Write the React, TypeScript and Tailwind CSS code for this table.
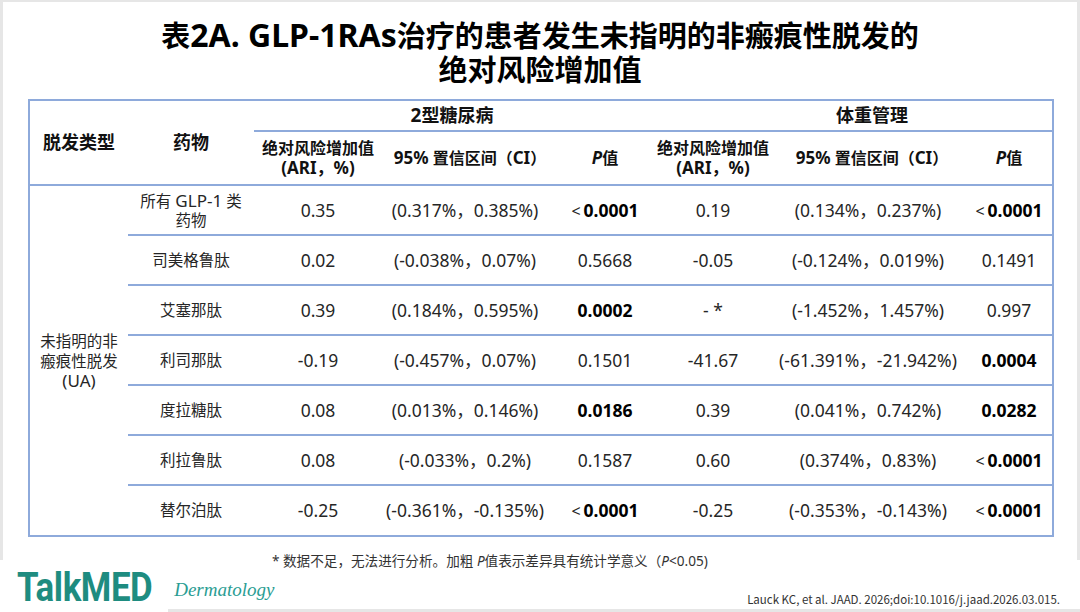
import React from "react";

type P = { t: string; b?: boolean };
type Row = {
  drug: React.ReactNode;
  a: string;
  ci: string;
  p: P;
  a2: string;
  ci2: string;
  p2: P;
};

const L = ({ children, c = "" }: { children: React.ReactNode; c?: string }) => (
  <span className={"text-[17px] " + c}>{children}</span>
);

const rows: Row[] = [
  {
    drug: (
      <>
        <span>
          所有 <L>GLP-1</L> 类
        </span>
        <span>药物</span>
      </>
    ),
    a: "0.35", ci: "(0.317%，0.385%)", p: { t: "<0.0001", b: true }, a2: "0.19", ci2: "(0.134%，0.237%)", p2: { t: "<0.0001", b: true },
  },
  { drug: <span>司美格鲁肽</span>, a: "0.02", ci: "(-0.038%，0.07%)", p: { t: "0.5668" }, a2: "-0.05", ci2: "(-0.124%，0.019%)", p2: { t: "0.1491" } },
  { drug: <span>艾塞那肽</span>, a: "0.39", ci: "(0.184%，0.595%)", p: { t: "0.0002", b: true }, a2: "- *", ci2: "(-1.452%，1.457%)", p2: { t: "0.997" } },
  { drug: <span>利司那肽</span>, a: "-0.19", ci: "(-0.457%，0.07%)", p: { t: "0.1501" }, a2: "-41.67", ci2: "(-61.391%，-21.942%)", p2: { t: "0.0004", b: true } },
  { drug: <span>度拉糖肽</span>, a: "0.08", ci: "(0.013%，0.146%)", p: { t: "0.0186", b: true }, a2: "0.39", ci2: "(0.041%，0.742%)", p2: { t: "0.0282", b: true } },
  { drug: <span>利拉鲁肽</span>, a: "0.08", ci: "(-0.033%，0.2%)", p: { t: "0.1587" }, a2: "0.60", ci2: "(0.374%，0.83%)", p2: { t: "<0.0001", b: true } },
  { drug: <span>替尔泊肽</span>, a: "-0.25", ci: "(-0.361%，-0.135%)", p: { t: "<0.0001", b: true }, a2: "-0.25", ci2: "(-0.353%，-0.143%)", p2: { t: "<0.0001", b: true } },
];

function PVal({ p }: { p: P }) {
  if (p.t.startsWith("<")) {
    return (
      <span>
        <span className="font-normal mr-[3px] text-[16px]">&lt;</span>
        <span className="font-bold text-black">{p.t.slice(1)}</span>
      </span>
    );
  }
  return <span className={p.b ? "font-bold text-black" : ""}>{p.t}</span>;
}

const font = { fontFamily: '"Noto Sans", "Noto Sans CJK SC", sans-serif' };

function SubAri() {
  return (
    <div className="flex flex-col items-center justify-center leading-[20px] whitespace-nowrap">
      <span className="text-[16px]">绝对风险增加值</span>
      <L>(ARI，%)</L>
    </div>
  );
}

function SubCi({ c = "" }: { c?: string }) {
  return (
    <div className={"flex items-center justify-center text-[16px] whitespace-nowrap " + c}>
      <L>95%</L>&nbsp;置信区间（<L>CI</L>）
    </div>
  );
}

function SubP() {
  return (
    <div className="flex items-center justify-center text-[16px]">
      <L c="italic">P</L>值
    </div>
  );
}

export default function App() {
  return (
    <div
      className="w-[1080px] h-[612px] bg-white flex flex-col overflow-hidden text-[#262626]"
      style={font}
    >
      <div className="h-[2px] bg-[#e6e6e6] shrink-0" />
      <div className="flex flex-row flex-1 min-h-0">
        <div className="w-[3px] h-[558px] bg-[#e6e6e6] shrink-0" />
        <div className="flex-1 flex flex-col min-w-0">
          {/* Title */}
          <div className="pt-[16px] text-center text-[29px] leading-[34px] font-bold text-black whitespace-nowrap">
            <div>
              表<span className="text-[32px]">2A. GLP-1RAs</span>治疗的患者发生未指明的非瘢痕性脱发的
            </div>
            <div>绝对风险增加值</div>
          </div>

          {/* Table */}
          <div className="mt-[12px] ml-[25px] w-[1026px] border-2 border-[#8eaadb]">
            {/* Header */}
            <div className="grid grid-cols-[98px_126px_128px_166px_114px_102px_202px_86px] grid-rows-[29px_2px_52px] border-b-2 border-[#8eaadb] font-bold text-[#111]">
              <div className="row-span-3 flex items-center justify-center text-[18px]">脱发类型</div>
              <div className="row-span-3 flex items-center justify-center text-[18px]">药物</div>
              <div className="col-span-3 flex items-center justify-center text-[18px] pr-[12px]">
                <span className="text-[19px]">2</span>型糖尿病
              </div>
              <div className="col-span-3 flex items-center justify-center text-[18px] pl-[30px]">体重管理</div>
              <div className="col-span-6 bg-[#8eaadb]" />
              <SubAri />
              <SubCi c="pl-[10px]" />
              <SubP />
              <SubAri />
              <SubCi c="pl-[14px]" />
              <SubP />
            </div>

            {/* Body */}
            <div className="flex flex-row text-[15.5px]">
              <div className="w-[98px] shrink-0 flex flex-col items-center justify-center leading-[20px]">
                <span>未指明的非</span>
                <span>瘢痕性脱发</span>
                <L>(UA)</L>
              </div>
              <div className="flex-1 flex flex-col">
                {rows.map((r, i) => (
                  <div
                    key={i}
                    className={
                      "grid grid-cols-[126px_128px_166px_114px_102px_202px_86px] items-center text-center " +
                      (i < rows.length - 1 ? "h-[50px] border-b-2 border-[#8eaadb]" : "h-[49px]")
                    }
                  >
                    <div className="flex flex-col items-center leading-[19px]">{r.drug}</div>
                    <div className="text-[17.5px]">{r.a}</div>
                    <div className="text-[17.5px] whitespace-nowrap">{r.ci}</div>
                    <div className="text-[17.5px]">
                      <PVal p={r.p} />
                    </div>
                    <div className="text-[17.5px]">{r.a2}</div>
                    <div className="text-[17.5px] whitespace-nowrap pl-[6px]">{r.ci2}</div>
                    <div className="text-[17.5px]">
                      <PVal p={r.p2} />
                    </div>
                  </div>
                ))}
              </div>
            </div>
          </div>

          {/* Footnote */}
          <div className="mt-[15px] ml-[269px] text-[13.6px] leading-[18px] text-[#333] whitespace-nowrap">
            * 数据不足，无法进行分析。加粗 <i>P</i>值表示差异具有统计学意义（<i>P</i>&lt;0.05)
          </div>

          {/* Bottom row */}
          <div className="flex flex-row items-end justify-between -mt-[4px] h-[42px]">
            <div className="flex flex-row items-end ml-[14px]">
              <span
                className="text-[41px] leading-[42px] font-bold text-[#1e8c80] scale-x-[0.85] origin-left inline-block tracking-[-0.5px]"
                style={{ fontFamily: "Roboto, sans-serif" }}
              >
                TalkMED
              </span>
              <span
                className="-ml-[2px] mb-[4px] text-[19px] italic text-[#2a9d93]"
                style={{ fontFamily: '"Liberation Serif", serif' }}
              >
                Dermatology
              </span>
            </div>
            <div
              className="mr-[17px] mb-[2px] text-[11.5px] leading-[14px] text-[#333]"
              style={{ fontFamily: '"Noto Sans CJK SC", sans-serif' }}
            >
              Lauck KC, et al. JAAD. 2026;doi:10.1016/j.jaad.2026.03.015.
            </div>
          </div>
        </div>
        <div className="w-[3px] h-[558px] bg-[#e6e6e6] shrink-0" />
      </div>
      <div className="h-[3px] flex flex-row shrink-0">
        <div className="w-[168px] bg-white" />
        <div className="flex-1 bg-[#e6e6e6]" />
      </div>
    </div>
  );
}
